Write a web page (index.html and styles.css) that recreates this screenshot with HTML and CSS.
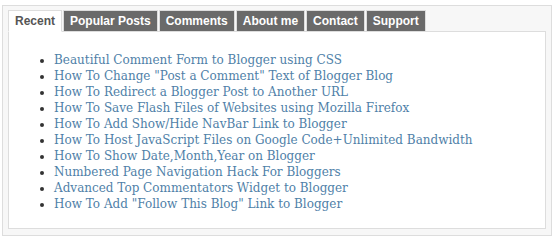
FILE: index.html
```html
<html lang="en">
<head>
  <meta charset="UTF-8">
  <title>Tabbed Widget</title>
  <link rel="stylesheet" href="styles.css">
</head>
<body>

  <!-- Tabbed sidebar widget -->
  <div class="tabbox">

    <!-- Tab strip -->
    <ul class="tabs">
      <li class="tab active">Recent</li>
      <li class="tab">Popular Posts</li>
      <li class="tab">Comments</li>
      <li class="tab">About me</li>
      <li class="tab">Contact</li>
      <li class="tab">Support</li>
    </ul>

    <!-- Recent posts panel -->
    <div class="panel">
      <ul class="posts">
        <li><a href="#">Beautiful Comment Form to Blogger using CSS</a></li>
        <li><a href="#">How To Change "Post a Comment" Text of Blogger Blog</a></li>
        <li><a href="#">How To Redirect a Blogger Post to Another URL</a></li>
        <li><a href="#">How To Save Flash Files of Websites using Mozilla Firefox</a></li>
        <li><a href="#">How To Add Show/Hide NavBar Link to Blogger</a></li>
        <li><a href="#">How To Host JavaScript Files on Google Code+Unlimited Bandwidth</a></li>
        <li><a href="#">How To Show Date,Month,Year on Blogger</a></li>
        <li><a href="#">Numbered Page Navigation Hack For Bloggers</a></li>
        <li><a href="#">Advanced Top Commentators Widget to Blogger</a></li>
        <li><a href="#">How To Add "Follow This Blog" Link to Blogger</a></li>
      </ul>
    </div>

  </div>
  <!-- End of widget -->

</body>
</html>
```

FILE: styles.css
```css
html,
body {
  background-color: #ffffff;
  margin: 0;
}

.tabbox {
  background-color: #f7f7f7;
  border: 1px solid #dddddd;
  box-sizing: border-box;
  height: 231px;
  margin: 5px 0 0 2px;
  padding: 4px 5px 5px 5px;
  width: 550px;
}

.tabs {
  display: flex;
  list-style: none;
  margin: 0;
  padding: 0;
  position: relative;
  z-index: 1;
}

.tab {
  background-color: #6a6a6a;
  border: 1px solid #dddddd;
  color: white;
  font-family: "Liberation Sans", Arial, sans-serif;
  font-size: 12px;
  font-weight: bold;
  height: 20px;
  line-height: 21px;
  margin-right: 1px;
  padding: 0 6px;
}

.tab.active {
  background-color: white;
  border-bottom-color: white;
  color: #555555;
}

.panel {
  background-color: white;
  border: 1px solid #dddddd;
  box-sizing: border-box;
  height: 198px;
  margin-top: -1px;
  width: 538px;
}

.posts {
  font-family: "DejaVu Serif", Georgia, serif;
  font-size: 12px;
  line-height: 16px;
  margin: 20px 0 0 0;
  padding-left: 45px;
}

.posts li {
  color: #333333;
}

.posts a {
  color: #4f7fa8;
  text-decoration: none;
}
```
